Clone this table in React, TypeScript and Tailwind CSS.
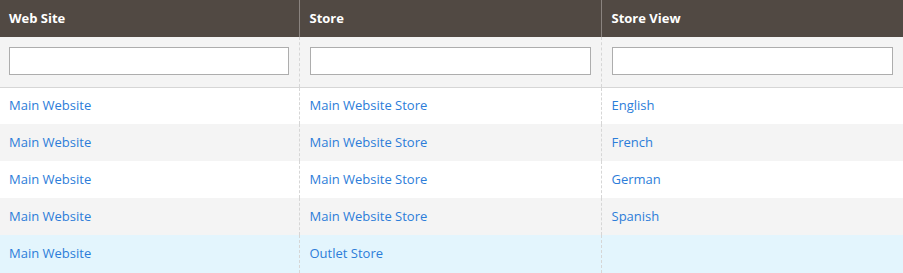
import React from 'react';

const rows = [
  { site: 'Main Website', store: 'Main Website Store', view: 'English' },
  { site: 'Main Website', store: 'Main Website Store', view: 'French' },
  { site: 'Main Website', store: 'Main Website Store', view: 'German' },
  { site: 'Main Website', store: 'Main Website Store', view: 'Spanish' },
  { site: 'Main Website', store: 'Outlet Store', view: '' },
];

export default function App() {
  return (
    <div className="w-[903px] bg-white font-['Open_Sans',sans-serif] text-[13px]">
      <table className="w-full table-fixed border-collapse">
        <colgroup>
          <col className="w-[299px]" />
          <col className="w-[302px]" />
          <col className="w-[302px]" />
        </colgroup>
        <thead>
          <tr className="h-[37px] bg-[#514943] text-white font-bold text-left">
            <th className="pl-[9px] font-bold">Web Site</th>
            <th className="pl-[10px] font-bold border-l border-[#8a837f]">Store</th>
            <th className="pl-[10px] font-bold border-l border-[#8a837f]">Store View</th>
          </tr>
          <tr className="h-[50px] bg-[#f4f4f4] border-b border-[#d6d6d6]">
            <td className="pl-[9px] pr-[10px] pb-[1px]">
              <input className="block w-full h-[28px] bg-white border border-[#adadad] outline-none" />
            </td>
            <td className="pl-[10px] pr-[10px] pb-[1px] border-l border-dashed border-[#d6d6d6]">
              <input className="block w-full h-[28px] bg-white border border-[#adadad] outline-none" />
            </td>
            <td className="pl-[10px] pr-[10px] pb-[1px] border-l border-dashed border-[#d6d6d6]">
              <input className="block w-full h-[28px] bg-white border border-[#adadad] outline-none" />
            </td>
          </tr>
        </thead>
        <tbody>
          {rows.map((r, i) => (
            <tr
              key={i}
              className={`text-[#2c7dd9] ${i === 4 ? 'h-[39px] bg-[#e3f5fd] border-b-2 border-[#d6d6d6]' : i % 2 ? 'h-[37px] bg-[#f4f4f4]' : 'h-[37px] bg-white'}`}
            >
              <td className="pl-[9px]">{r.site}</td>
              <td className="pl-[10px] border-l border-dashed border-[#d6d6d6]">{r.store}</td>
              <td className="pl-[10px] border-l border-dashed border-[#d6d6d6]">{r.view}</td>
            </tr>
          ))}
        </tbody>
      </table>
    </div>
  );
}
